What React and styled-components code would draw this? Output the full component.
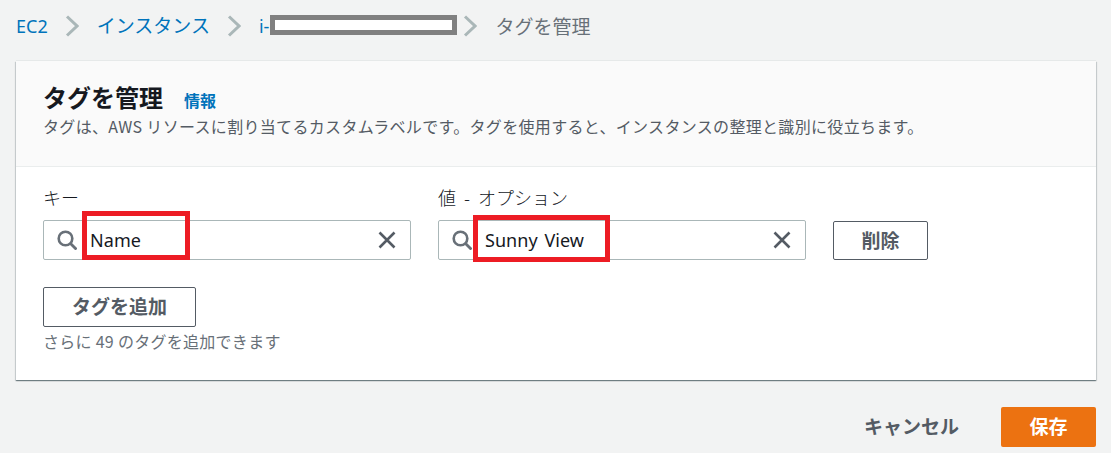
import React from "react";
import styled, { createGlobalStyle } from "styled-components";

const Global = createGlobalStyle`
  html, body { margin: 0; padding: 0; background: #f2f3f3; }
  body { font-family: "Noto Sans CJK JP", "Noto Sans", sans-serif; }
`;
const Page = styled.div`
  width: 1111px; height: 453px; overflow: hidden; box-sizing: border-box;
  padding: 0 15px 0 16px; background: #f2f3f3; color: #16191f;
`;
const Crumbs = styled.nav`
  height: 61px; padding-bottom: 9px; box-sizing: border-box;
  display: flex; align-items: center; font-size: 19px; line-height: 26px;
`;
const CrumbLink = styled.span`
  color: #0073bb; font-family: "Noto Sans", "Noto Sans CJK JP", sans-serif;
  font-size: ${p => p.$size || 19}px;
`;
const CrumbCurrent = styled.span`
  color: #687078; margin-left: 18px; font-size: 19px;
`;
const Sep = styled.svg`
  width: 14px; height: 22px; margin: ${p => p.$m || "0 18px 0 17px"}; flex: none;
`;
const Redacted = styled.span`
  display: inline-block; width: 177px; height: 10px; flex: none; margin: 0 0 3px 1px;
  background: #fff; border: 5px solid #808080;
`;
const Card = styled.section`
  width: 1080px; height: 319px; background: #fff; box-sizing: border-box;
  box-shadow: 0 1px 1px 0 rgba(0,28,36,.4), 1px 1px 1px 0 rgba(0,28,36,.12), -1px 1px 1px 0 rgba(0,28,36,.12), 0 -1px 0 0 #e6e9e9;
`;
const Head = styled.header`
  height: 106px; box-sizing: border-box; padding: 20px 27px 0 27px;
  background: #fafafa; border-bottom: 1px solid #eaeded;
`;
const TitleRow = styled.div`
  display: flex; align-items: baseline; height: 32px;
`;
const Title = styled.h1`
  margin: 0; font-size: 24px; line-height: 32px; font-weight: 700; color: #16191f;
`;
const Info = styled.a`
  margin-left: 21px; font-size: 16px; font-weight: 700; color: #0073bb;
`;
const Desc = styled.p`
  margin: 3px 0 0; font-size: 16px; line-height: 20px; color: #545b64; letter-spacing: .32px;
  white-space: nowrap;
`;
const Body = styled.div`
  padding: 18px 27px 0 27px;
`;
const Row = styled.div`
  display: flex; align-items: flex-end;
`;
const Field = styled.div`
  width: 368px; margin-right: 27px; display: flex; flex-direction: column;
`;
const Label = styled.label`
  font-size: 18px; line-height: 24px; height: 24px; margin-bottom: 11px; color: #16191f;
  word-spacing: 4px; font-weight: 300;
`;
const Input = styled.div`
  position: relative; height: 40px; box-sizing: border-box; background: #fff;
  border: 1px solid #aab7b8; border-radius: 2px;
  display: flex; align-items: center; padding: 0 13px 0 46px;
`;
const SearchIcon = styled.svg`
  width: 20px; height: 20px; flex: none; position: absolute; left: 13px; top: 9px;
`;
const Value = styled.span`
  flex: 1; font-family: "Noto Sans", sans-serif; font-size: 18px; color: #16191f;
  letter-spacing: .05px; word-spacing: 2px; padding-bottom: 1px;
`;
const ClearIcon = styled.svg`
  width: 18px; height: 18px; flex: none; margin-right: 1px;
`;
const Mark = styled.span`
  position: absolute; box-sizing: border-box; border: 5px solid #ed1c24; pointer-events: none;
  left: ${p => p.$l}px; top: ${p => p.$t}px; width: ${p => p.$w}px; height: ${p => p.$h}px;
`;
const Btn = styled.button`
  height: ${p => p.$h || 40}px; box-sizing: border-box; background: #fff; border: 1px solid #545b64;
  border-radius: 2px; padding: 0 0 3px; font-family: inherit; font-size: 19px; font-weight: 700;
  color: #545b64; width: ${p => p.$w}px;
`;
const Add = styled.div`
  margin-top: 27px;
`;
const Hint = styled.p`
  margin: 4px 0 0; font-size: 16px; line-height: 20px; color: #687078; letter-spacing: .28px;
`;
const Footer = styled.footer`
  display: flex; justify-content: flex-end; align-items: center; margin-top: 27px;
`;
const Cancel = styled.button`
  background: none; border: 0; padding: 0 0 2px; margin-right: 42px; font-family: inherit;
  font-size: 19px; font-weight: 700; color: #545b64; line-height: 38px;
`;
const Save = styled.button`
  width: 95px; height: 40px; border: 0; border-radius: 2px; background: #ec7211; color: #fff;
  font-family: inherit; font-size: 19px; font-weight: 700; padding: 0 0 3px;
`;

const Chevron = ({ m }) => (
  <Sep $m={m} viewBox="0 0 14 22"><path d="M2 1.5l10 9.5-10 9.5" fill="none" stroke="#aab7b8" strokeWidth="3" /></Sep>
);
const Search = () => (
  <SearchIcon viewBox="0 0 20 20">
    <circle cx="8.5" cy="8.5" r="6.8" fill="none" stroke="#687078" strokeWidth="2.6" />
    <path d="M13.5 13.5l6 6" stroke="#687078" strokeWidth="2.8" />
  </SearchIcon>
);
const Clear = () => (
  <ClearIcon viewBox="0 0 18 18"><path d="M1.5 1.5l15 15M16.5 1.5l-15 15" stroke="#545b64" strokeWidth="2.6" /></ClearIcon>
);

export default function App() {
  return (
    <Page>
      <Global />
      <Crumbs>
        <CrumbLink $size={18}>EC2</CrumbLink>
        <Chevron />
        <CrumbLink>インスタンス</CrumbLink>
        <Chevron />
        <CrumbLink $size={18}>i-</CrumbLink>
        <Redacted />
        <Chevron m="0 0 0 6px" />
        <CrumbCurrent>タグを管理</CrumbCurrent>
      </Crumbs>
      <Card>
        <Head>
          <TitleRow><Title>タグを管理</Title><Info>情報</Info></TitleRow>
          <Desc>タグは、AWS リソースに割り当てるカスタムラベルです。タグを使用すると、インスタンスの整理と識別に役立ちます。</Desc>
        </Head>
        <Body>
          <Row>
            <Field>
              <Label>キー</Label>
              <Input>
                <Search /><Value>Name</Value><Clear />
                <Mark $l={38} $t={-10} $w={108} $h={49} />
              </Input>
            </Field>
            <Field>
              <Label>値 - オプション</Label>
              <Input>
                <Search /><Value>Sunny View</Value><Clear />
                <Mark $l={34} $t={-6} $w={137} $h={47} />
              </Input>
            </Field>
            <Btn $w={95} $h={39}>削除</Btn>
          </Row>
          <Add>
            <Btn $w={153}>タグを追加</Btn>
            <Hint>さらに 49 のタグを追加できます</Hint>
          </Add>
        </Body>
      </Card>
      <Footer>
        <Cancel>キャンセル</Cancel>
        <Save>保存</Save>
      </Footer>
    </Page>
  );
}
